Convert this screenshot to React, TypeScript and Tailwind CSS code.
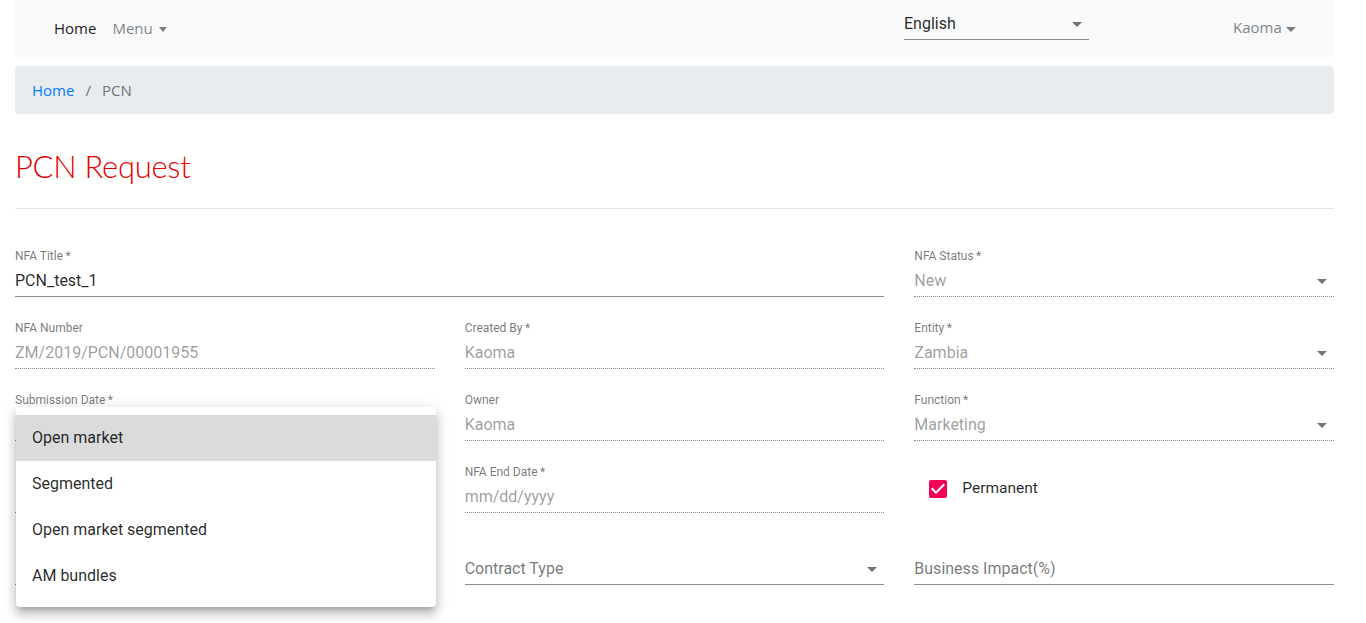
import React from "react";

const roboto = "font-['Roboto',sans-serif]";

function Caret() {
  return (
    <svg viewBox="0 0 24 24" className="absolute right-0 top-[4px] w-6 h-6 fill-black/55">
      <path d="M7 10l5 5 5-5z" />
    </svg>
  );
}

type FieldProps = {
  label?: string;
  required?: boolean;
  value: string;
  tone?: "dark" | "muted" | "placeholder";
  dotted?: boolean;
  select?: boolean;
  className?: string;
  children?: React.ReactNode;
};

function Field({ label, required, value, tone = "muted", dotted, select, className = "", children }: FieldProps) {
  const color =
    tone === "dark" ? "text-black/85" : tone === "placeholder" ? "text-black/55" : "text-black/40";
  return (
    <div className={`relative ${roboto} ${className}`}>
      <div className="mt-px h-[14px] text-[12px] leading-[14px] text-black/55">
        {label}
        {label && required ? <span>&thinsp;*</span> : null}
      </div>
      <div
        className={`relative mt-[2px] h-[32px] border-b ${
          dotted ? "border-dotted border-black/45" : "border-solid border-black/45"
        }`}
      >
        <div className={`pt-[6px] text-[16px] leading-[19px] ${color}`}>{value}</div>
        {select && <Caret />}
      </div>
      {children}
    </div>
  );
}

function Dropdown() {
  const items = ["Open market", "Segmented", "Open market segmented", "AM bundles"];
  return (
    <div className="absolute left-[1px] top-[15px] z-10 w-[420px] rounded bg-white py-2 shadow-[0_5px_5px_-3px_rgba(0,0,0,0.2),0_8px_10px_1px_rgba(0,0,0,0.14),0_3px_14px_2px_rgba(0,0,0,0.12)]">
      {items.map((item, i) => (
        <div
          key={item}
          className={`flex h-[46px] items-center px-4 text-[16px] text-black/85 ${
            i === 0 ? "bg-[#dbdbdb]" : ""
          }`}
        >
          {item}
        </div>
      ))}
    </div>
  );
}

export default function App() {
  return (
    <div className="min-h-screen bg-white px-[15px] pr-[32px]">
      {/* top navbar */}
      <nav className="flex h-[57px] items-center bg-[#f8f9fa] font-['Open_Sans',sans-serif]">
        <div className="flex flex-1 items-center pl-[39px] text-[15px]">
          <span className="text-black/90">Home</span>
          <span className="ml-[16px] flex items-center text-black/50">
            Menu
            <span className="ml-[6px] mt-[1px] inline-block h-0 w-0 border-x-[4.5px] border-t-[5px] border-x-transparent border-t-black/50" />
          </span>
        </div>
        <div className={`relative mb-[9px] h-[32px] w-[185px] border-b border-black/45 ${roboto}`}>
          <div className="pt-[6px] text-[16px] leading-[19px] text-black/85">English</div>
          <Caret />
        </div>
        <div className="ml-[144px] mb-[2px] flex w-[101px] items-center pr-[39px] text-[15px] text-black/50">
          Kaoma
          <span className="ml-[4px] mt-[3px] inline-block h-0 w-0 border-x-[5px] border-t-[5px] border-x-transparent border-t-black/50" />
        </div>
      </nav>

      {/* breadcrumb */}
      <div className="mt-[9px] flex h-[48px] items-center rounded bg-[#e9ecef] px-[17px] font-['Open_Sans',sans-serif] text-[15px]">
        <span className="text-[#007bff]">Home</span>
        <span className="px-[11px] text-[#6c757d]">/</span>
        <span className="text-[#6c757d]">PCN</span>
      </div>

      <h1 className="pt-[32px] font-['Lato',sans-serif] text-[31px] font-light leading-[40px] tracking-[-0.3px] text-[#e60000]">
        PCN Request
      </h1>
      <div className="mt-[22px] h-px bg-black/10" />

      {/* form */}
      <div className="mt-[39px] grid grid-cols-3 gap-x-[30px] gap-y-[23px]">
        <Field className="col-span-2" label="NFA Title" required value="PCN_test_1" tone="dark" />
        <Field label="NFA Status" required value="New" dotted select />

        <Field label="NFA Number" value="ZM/2019/PCN/00001955" dotted />
        <Field label="Created By" required value="Kaoma" dotted />
        <Field label="Entity" required value="Zambia" dotted select />

        <Field label="Submission Date" required value="" tone="dark">
          <Dropdown />
        </Field>
        <Field label="Owner" value="Kaoma" dotted />
        <Field label="Function" required value="Marketing" dotted select />

        <Field value="" />
        <Field label="NFA End Date" required value="mm/dd/yyyy" dotted />
        <div className={`flex h-[49px] items-center ${roboto}`}>
          <svg viewBox="0 0 24 24" className="ml-[12px] h-6 w-6 fill-[#f50057]">
            <path d="M19 3H5c-1.11 0-2 .9-2 2v14c0 1.1.89 2 2 2h14c1.11 0 2-.9 2-2V5c0-1.1-.89-2-2-2zm-9 14l-5-5 1.41-1.41L10 14.17l7.59-7.59L19 8l-9 9z" />
          </svg>
          <span className="ml-[12px] text-[15.5px] text-black/85">Permanent</span>
        </div>

        <Field value="" select />
        <Field value="Contract Type" tone="placeholder" select />
        <Field value="Business Impact(%)" tone="placeholder" />
      </div>
      <div className="h-10" />
    </div>
  );
}
